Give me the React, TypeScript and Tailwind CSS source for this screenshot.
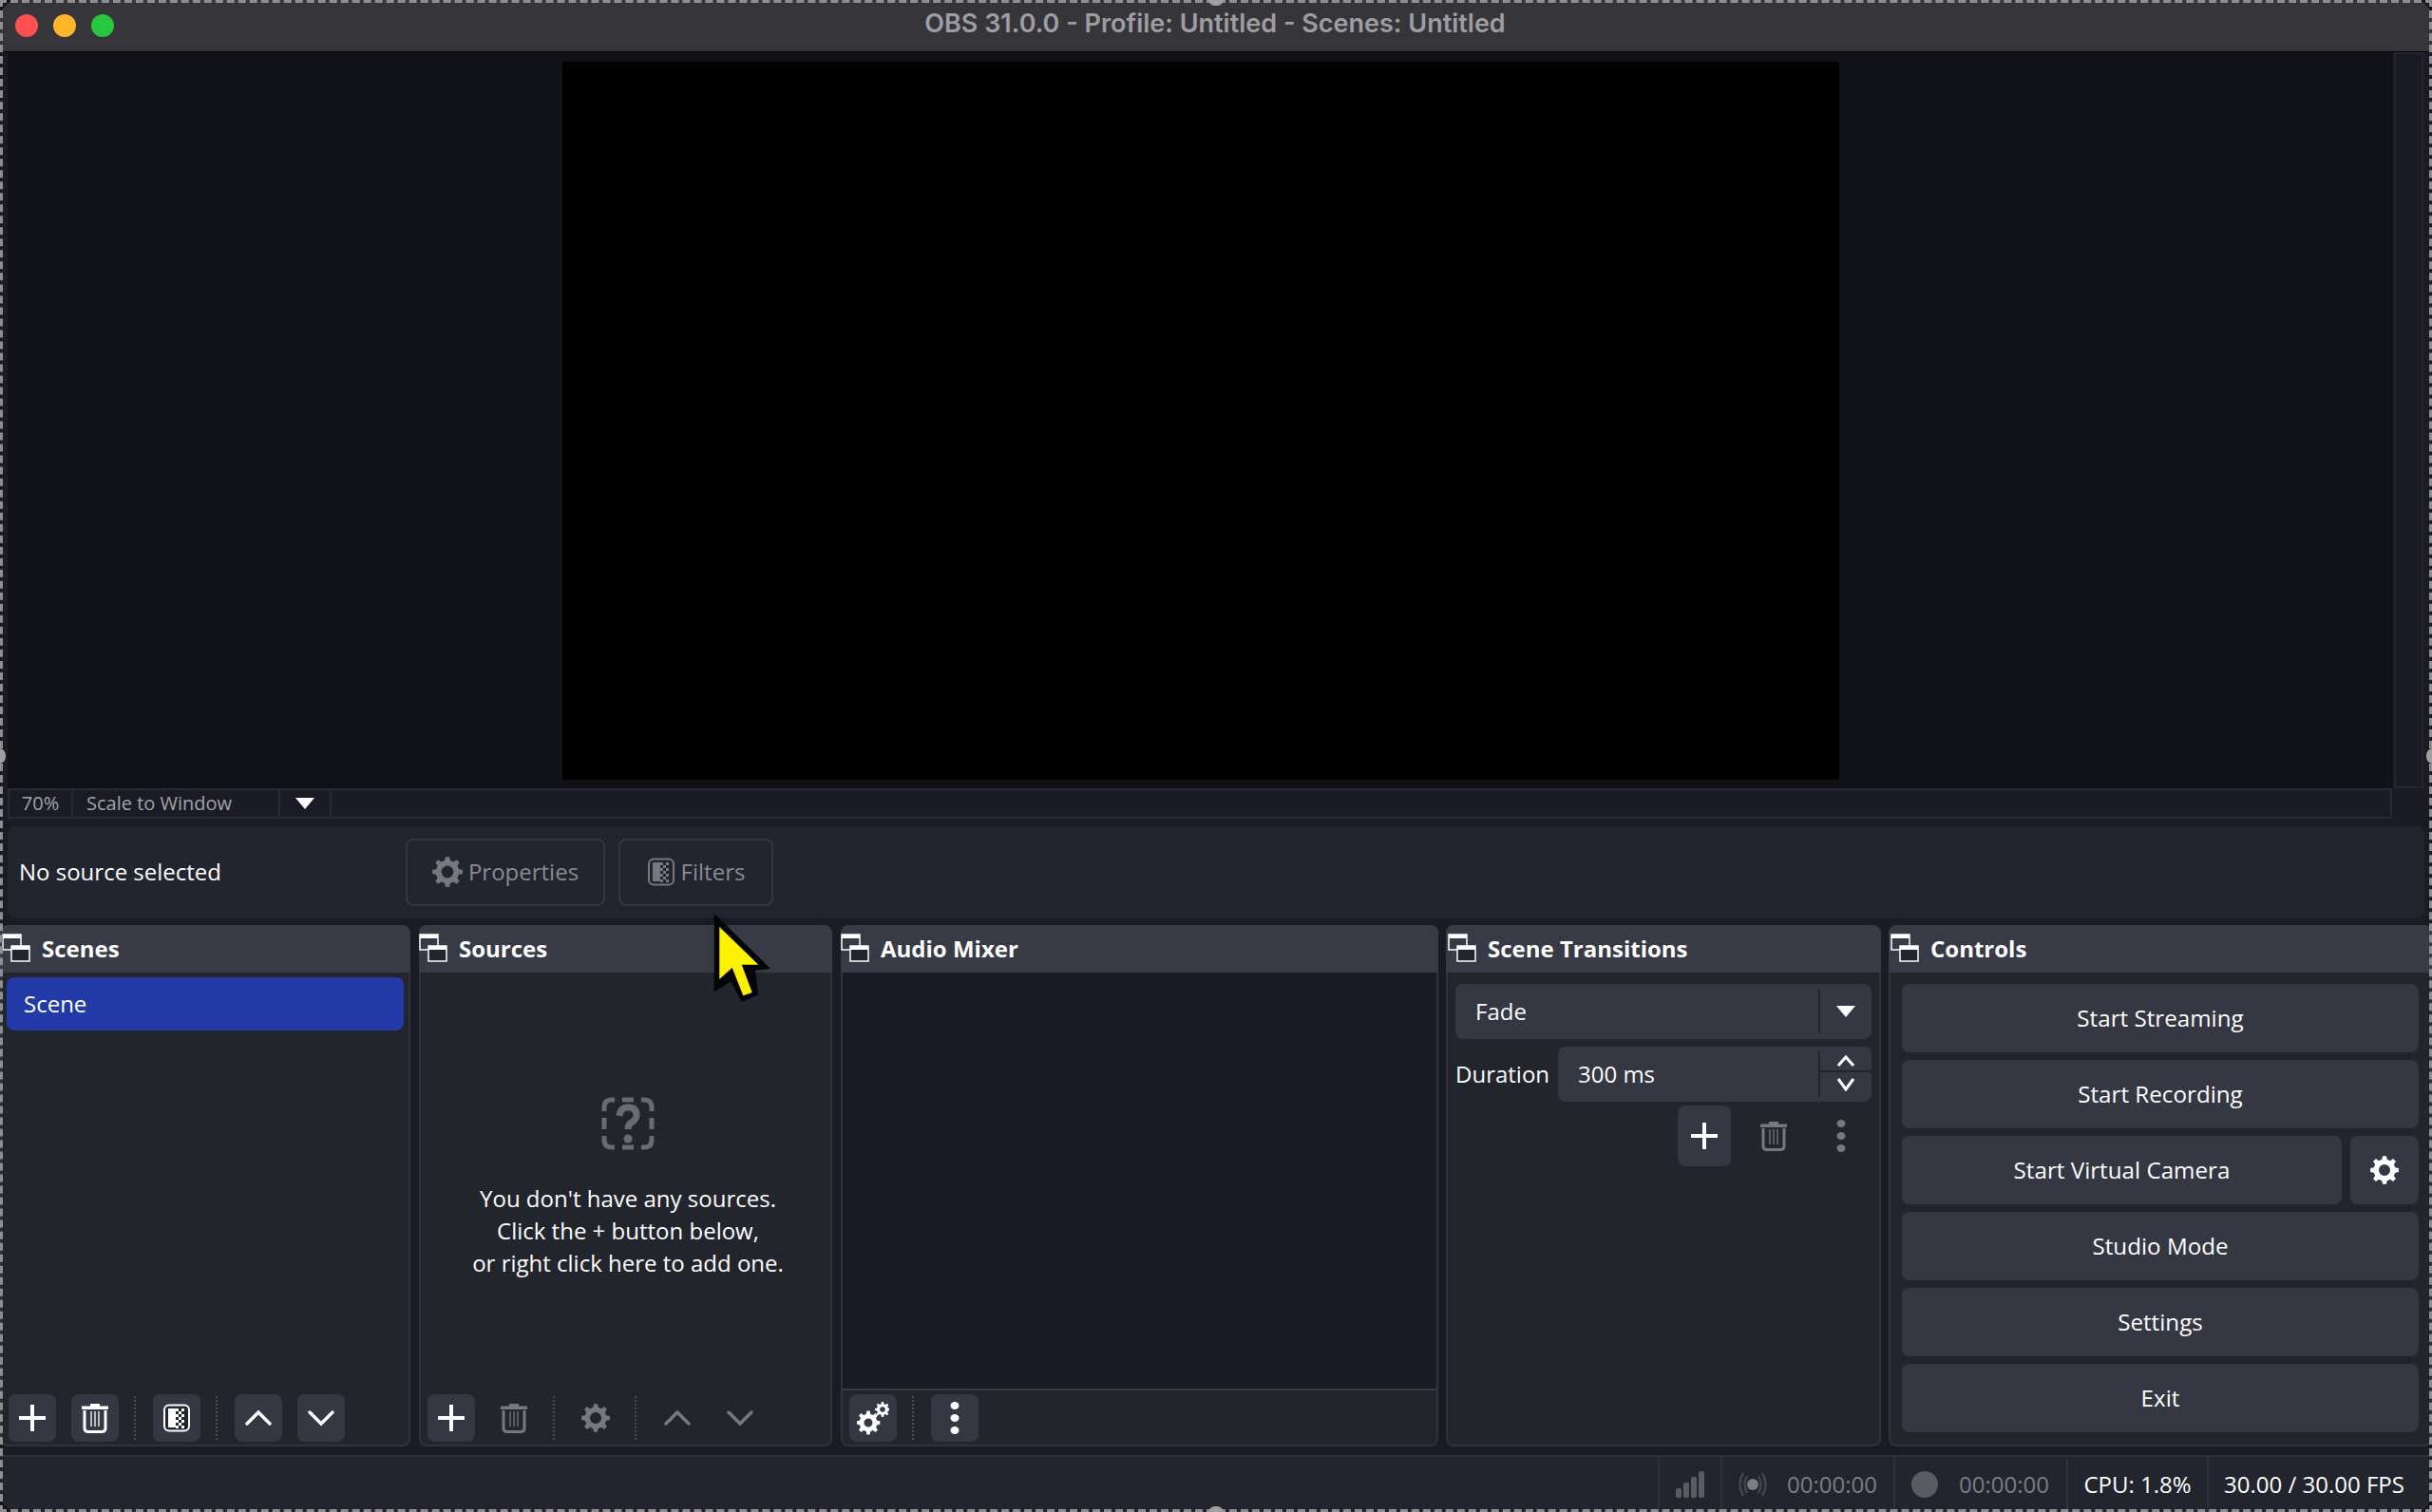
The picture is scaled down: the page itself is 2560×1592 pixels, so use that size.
import type { ReactNode } from 'react';

function gearPath(cx: number, cy: number, outer: number, inner: number, hole: number, teeth = 8) {
  const pts: string[] = [];
  const step = (Math.PI * 2) / teeth;
  for (let i = 0; i < teeth; i++) {
    const a = i * step - Math.PI / 2;
    const list: [number, number][] = [
      [inner, a - step * 0.3],
      [outer, a - step * 0.17],
      [outer, a + step * 0.17],
      [inner, a + step * 0.3],
    ];
    for (const [r, t] of list) {
      pts.push(`${(cx + Math.cos(t) * r).toFixed(2)} ${(cy + Math.sin(t) * r).toFixed(2)}`);
    }
  }
  const d = `M${pts.join('L')}Z`;
  return `${d}M${cx - hole} ${cy}a${hole} ${hole} 0 1 0 ${hole * 2} 0a${hole} ${hole} 0 1 0 ${-hole * 2} 0Z`;
}

function DockIcon() {
  return (
    <svg width="30" height="30" viewBox="0 0 30 30" className="mb-[3px] shrink-0">
      <rect x="1" y="1" width="19" height="16" fill="none" stroke="#fff" strokeWidth="1.5" />
      <rect x="1" y="1" width="19" height="4" fill="#fff" />
      <rect x="10" y="13" width="19" height="16" fill="#23252d" stroke="#fff" strokeWidth="1.5" />
      <rect x="10" y="13" width="19" height="4" fill="#fff" />
    </svg>
  );
}

function Plus() {
  return (
    <svg width="28" height="28" viewBox="0 0 28 28">
      <path d="M14 0V28M0 14H28" stroke="#fff" strokeWidth="4" />
    </svg>
  );
}

function Trash({ color = '#fff' }: { color?: string }) {
  return (
    <svg width="30" height="32" viewBox="0 0 30 32">
      <path d="M10 3.5V1H20V3.500H29V7H1V3.5Z" fill={color} />
      <path d="M4 8V27Q4 30.500 8 30.500H22Q26 30.500 26 27V8" fill="none" stroke={color} strokeWidth="3" />
      <path d="M11 9V25M15 9V25M19 9V25" stroke={color} strokeWidth="1.300" />
    </svg>
  );
}

function Chevron({ up, color = '#fff' }: { up?: boolean; color?: string }) {
  return (
    <svg width="30" height="18" viewBox="0 0 30 18">
      <path d={up ? 'M3 15L15 3L27 15' : 'M3 3L15 15L27 3'} fill="none" stroke={color} strokeWidth="3.500" strokeLinecap="round" />
    </svg>
  );
}

function Gear({ color = '#fff', size = 30 }: { color?: string; size?: number }) {
  return (
    <svg width={size} height={size} viewBox="0 0 30 30">
      <path d={gearPath(15, 15, 15, 11.5, 6)} fill={color} fillRule="evenodd" />
    </svg>
  );
}

function TwoGears() {
  return (
    <svg width="34" height="36" viewBox="0 0 34 36">
      <path d={gearPath(12, 23, 12.5, 9.5, 4.5)} fill="#fff" fillRule="evenodd" />
      <path d={gearPath(27, 9, 8, 6, 2.8)} fill="#fff" fillRule="evenodd" />
    </svg>
  );
}

function Dots({ color = '#fff' }: { color?: string }) {
  return (
    <svg width="10" height="34" viewBox="0 0 10 34">
      <ellipse cx="5" cy="4" rx="4.5" ry="4" fill={color} />
      <ellipse cx="5" cy="17" rx="4.5" ry="4" fill={color} />
      <ellipse cx="5" cy="30" rx="4.5" ry="4" fill={color} />
    </svg>
  );
}

function FilterIcon({ color = '#fff', fade = '#23252d' }: { color?: string; fade?: string }) {
  const cells: ReactNode[] = [];
  for (let y = 0; y < 7; y++) {
    for (let x = 0; x < 3; x++) {
      if ((x + y) % 2 === 0) {
        cells.push(<rect key={`${x}-${y}`} x={14 + x * 3} y={5 + y * 3} width="3" height="3" fill={color} />);
      }
    }
  }
  return (
    <svg width="30" height="30" viewBox="0 0 30 30">
      <rect x="2" y="1.5" width="26" height="27" rx="5" fill={fade} stroke={color} strokeWidth="2" />
      <rect x="6" y="5" width="8" height="20" fill={color} />
      {cells}
    </svg>
  );
}

function Caret() {
  return (
    <svg width="20" height="12" viewBox="0 0 20 12">
      <path d="M0 0H20L10 12Z" fill="#fff" />
    </svg>
  );
}

function ToolButton({ children, plain }: { children: ReactNode; plain?: boolean }) {
  return (
    <div className={plain ? 'flex h-[50px] w-[50px] shrink-0 items-center justify-center rounded-lg' : 'flex h-[50px] w-[50px] shrink-0 items-center justify-center rounded-lg bg-[#353742]'}>
      {children}
    </div>
  );
}

function Sep() {
  return <div className="ml-4 mr-[18px] mt-[2px] h-[46px] border-l-2 border-dotted border-[#4b4c52]" />;
}

function Dock({ title, className, flush, children }: { title: string; className: string; flush?: boolean; children: ReactNode }) {
  return (
    <section className={`flex flex-col ${className}`}>
      <header className={flush ? 'flex h-[50px] shrink-0 items-center gap-3 rounded-t-lg bg-[#383a45]' : 'flex h-[50px] shrink-0 items-center gap-3 rounded-t-lg bg-[#383a45] pl-[2px]'}>
        <DockIcon />
        <span className="text-[24px] font-bold text-white">{title}</span>
      </header>
      <div className="flex min-h-0 flex-1 flex-col rounded-b-lg border-x-2 border-b-2 border-[#2f313b] bg-[#23252d]">{children}</div>
    </section>
  );
}

function Footer({ children }: { children: ReactNode }) {
  return <div className="flex h-[57px] shrink-0 items-start pl-[7px] pt-[4px]">{children}</div>;
}

function BigButton({ label, className = 'w-full' }: { label: string; className?: string }) {
  return <div className={`flex h-[72px] items-center justify-center rounded-lg bg-[#353742] text-[24.2px] text-white ${className}`}>{label}</div>;
}

function EmptySources() {
  return (
    <div className="flex flex-1 flex-col items-center pl-[5px] pt-[131px] text-center text-[24px] leading-[34px] text-white">
      <svg width="56" height="56" viewBox="0 0 56 56" fill="none" stroke="#6a6b70" strokeWidth="5" className="mb-[34px]">
        <path d="M14 3H11Q3 3 3 11V15M42 3H45Q53 3 53 11V15M14 53H11Q3 53 3 45V41M42 53H45Q53 53 53 45V41M3 22V34M53 22V34M22 3H34M22 53H34" />
        <path d="M19 20Q20 11 28 11Q37 11 37 19Q37 24 31.5 27Q28 29 28 34" strokeWidth="7" />
        <circle cx="28" cy="44" r="4.5" fill="#6a6b70" stroke="none" />
      </svg>
      <p>You don't have any sources.</p>
      <p>Click the + button below,</p>
      <p>or right click here to add one.</p>
    </div>
  );
}

function Cursor() {
  return (
    <svg width="70" height="100" viewBox="0 0 70 100" className="absolute left-[748px] top-[958px]">
      <path d="M3.7 3.7L63 62L47 63.700L50.300 89.300L32.700 97L21.300 75.300L3.700 86.300Z" fill="#050505" />
      <path d="M9.300 18L50.300 57.700H32.700L43.700 87L34.300 90.300L22.700 61L9.300 73Z" fill="#fff200" />
    </svg>
  );
}

function Handles() {
  return (
    <>
      <div className="pointer-events-none absolute -inset-px border-4 border-dashed border-[#8f8f92]" />
      <div className="absolute left-[1272px] top-[-8px] h-[14px] w-[16px] rounded-full bg-[#a0a0a0]" />
      <div className="absolute bottom-[-8px] left-[1272px] h-[14px] w-[16px] rounded-full bg-[#a0a0a0]" />
      <div className="absolute left-[-8px] top-[788px] h-[16px] w-[14px] rounded-full bg-[#a0a0a0]" />
      <div className="absolute right-[-8px] top-[788px] h-[16px] w-[14px] rounded-full bg-[#a0a0a0]" />
    </>
  );
}

export default function App() {
  return (
    <div className="relative h-[1592px] w-[2560px] overflow-hidden bg-[#14151b] font-['Open_Sans',sans-serif]">
      <div className="flex h-full w-full flex-col overflow-hidden rounded-[20px] bg-[#1a1b24]">
        <div className="relative flex h-[55px] shrink-0 items-center border-b border-black bg-[#36353a]">
          <div className="ml-4 flex gap-4">
            <span className="h-6 w-6 rounded-full bg-[#ff5050]" />
            <span className="h-6 w-6 rounded-full bg-[#feb52a]" />
            <span className="h-6 w-6 rounded-full bg-[#27c83f]" />
          </div>
          <div className="mb-[3px] flex-1 pr-[122px] text-center font-['Inter',sans-serif] text-[27px] font-semibold text-[#9e9da3]">
            OBS 31.0.0 - Profile: Untitled - Scenes: Untitled
          </div>
        </div>

        <div className="flex h-[775px] shrink-0 pl-2">
          <div className="flex flex-1 items-center justify-center bg-[#111217]">
            <div className="h-[756px] w-[1344px] bg-black" />
          </div>
          <div className="ml-px mr-[9px] w-[31px] border-2 border-[#24252e] bg-[#191a24]" />
        </div>

        <div className="ml-2 mr-[42px] flex h-[32px] shrink-0 items-center border-2 border-[#272934] text-[20px] text-[#a3a4a8]">
          <div className="flex h-full w-[67px] items-center justify-center border-r-2 border-[#272934]">70%</div>
          <div className="flex h-full w-[218px] items-center border-r-2 border-[#272934] pl-[14px]">Scale to Window</div>
          <div className="flex h-full w-[54px] items-center justify-center border-r-2 border-[#272934]"><Caret /></div>
        </div>

        <div className="ml-2 mr-2 mt-2 flex h-[96px] shrink-0 items-center rounded-lg bg-[#22252d] pl-3 text-[24px]">
          <span className="w-[407px] text-white">No source selected</span>
          <div className="flex h-[71px] w-[210px] items-center justify-center gap-[6px] rounded-lg border-2 border-[#34363f] text-[#8a8b90]">
            <Gear color="#77787d" size={32} /> Properties
          </div>
          <div className="ml-[14px] flex h-[71px] w-[163px] items-center justify-center gap-[6px] rounded-lg border-2 border-[#34363f] text-[#8a8b90]">
            <FilterIcon color="#77787d" /> Filters
          </div>
        </div>

        <div className="mt-2 flex h-[549px] shrink-0">
          <Dock title="Scenes" className="w-[432px]">
            <div className="mx-[5px] mt-[5px] flex h-[56px] items-center rounded-lg bg-[#213aa7] pl-[18px] text-[24px] text-white">Scene</div>
            <div className="flex-1" />
            <Footer>
              <ToolButton><Plus /></ToolButton>
              <div className="w-4" />
              <ToolButton><Trash /></ToolButton>
              <Sep />
              <ToolButton><FilterIcon /></ToolButton>
              <Sep />
              <ToolButton><Chevron up /></ToolButton>
              <div className="w-4" />
              <ToolButton><Chevron /></ToolButton>
            </Footer>
          </Dock>

          <Dock title="Sources" flush className="ml-[9px] w-[435px]">
            <EmptySources />
            <Footer>
              <ToolButton><Plus /></ToolButton>
              <div className="w-4" />
              <ToolButton plain><Trash color="#77787d" /></ToolButton>
              <Sep />
              <ToolButton plain><Gear color="#77787d" /></ToolButton>
              <Sep />
              <ToolButton plain><Chevron up color="#77787d" /></ToolButton>
              <div className="w-4" />
              <ToolButton plain><Chevron color="#77787d" /></ToolButton>
            </Footer>
          </Dock>

          <Dock title="Audio Mixer" flush className="ml-[9px] w-[629px]">
            <div className="flex-1 border-b-2 border-[#383a45] bg-[#191a24]" />
            <Footer>
              <ToolButton><TwoGears /></ToolButton>
              <Sep />
              <ToolButton><Dots /></ToolButton>
            </Footer>
          </Dock>

          <Dock title="Scene Transitions" className="ml-2 w-[458px]">
            <div className="flex flex-col gap-2 pl-2 pr-2 pt-3 text-[24px] text-white">
              <div className="flex h-[58px] items-center rounded-lg bg-[#353742] pl-[21px]">
                <span className="flex-1">Fade</span>
                <div className="flex h-[48px] w-[56px] items-center justify-center border-l-2 border-[#23252d]"><Caret /></div>
              </div>
              <div className="flex h-[58px] items-center">
                <span className="w-[108px] shrink-0">Duration</span>
                <div className="flex h-full flex-1 items-center rounded-lg bg-[#353742] pl-[21px]">
                  <span className="flex-1">300 ms</span>
                  <div className="flex h-[48px] w-[56px] flex-col items-center justify-center border-l-2 border-[#23252d]">
                    <div className="flex h-[22px] w-full items-center justify-center border-b-2 border-[#23252d]">
                      <svg width="20" height="12" viewBox="0 0 20 12"><path d="M2 11L10 2L18 11" fill="none" stroke="#fff" strokeWidth="3" /></svg>
                    </div>
                    <div className="flex h-[26px] items-center justify-center">
                      <svg width="20" height="14" viewBox="0 0 20 14"><path d="M2 1L10 12L18 1" fill="none" stroke="#fff" strokeWidth="3" /></svg>
                    </div>
                  </div>
                </div>
              </div>
            </div>
            <div className="mt-[4px] flex items-center justify-end pr-[12px]">
              <div className="flex h-[64px] w-[56px] items-center justify-center rounded-lg bg-[#353742]"><Plus /></div>
              <div className="ml-[17px] flex h-[64px] w-[56px] items-center justify-center"><Trash color="#77787d" /></div>
              <div className="ml-[15px] flex h-[64px] w-[56px] items-center justify-center"><Dots color="#77787d" /></div>
            </div>
          </Dock>

          <Dock title="Controls" className="ml-2 w-[572px]">
            <div className="flex flex-col gap-2 pl-3 pr-3 pt-3">
              <BigButton label="Start Streaming" />
              <BigButton label="Start Recording" />
              <div className="flex gap-[9px]">
                <BigButton label="Start Virtual Camera" className="flex-1" />
                <div className="flex h-[72px] w-[72px] items-center justify-center rounded-lg bg-[#353742]"><Gear /></div>
              </div>
              <BigButton label="Studio Mode" />
              <BigButton label="Settings" />
              <BigButton label="Exit" />
            </div>
          </Dock>
        </div>

        <div className="mt-[9px] flex flex-1 items-stretch border-t-2 border-[#2e303a] bg-[#22252d] text-[24px]">
          <div className="flex-1" />
          <div className="flex w-[66px] items-center justify-center border-l-2 border-[#2e303a]">
            <svg width="30" height="28" viewBox="0 0 30 28" fill="#5b5c62">
              <rect x="0" y="18" width="6" height="10" rx="2" />
              <rect x="8" y="12" width="6" height="16" rx="2" />
              <rect x="16" y="6" width="6" height="22" rx="2" />
              <rect x="24" y="0" width="6" height="28" rx="2" />
            </svg>
          </div>
          <div className="flex w-[182px] items-center gap-[20px] border-l-2 border-[#2e303a] pl-[16px] text-[#7c7d82]">
            <svg width="32" height="28" viewBox="0 0 32 28" fill="none">
              <circle cx="16" cy="14" r="6" fill="#7c7d82" />
              <path d="M10 5Q5 14 10 23M22 5Q27 14 22 23M6 2Q-1 14 6 26M26 2Q33 14 26 26" stroke="#44454b" strokeWidth="2.5" />
            </svg>
            00:00:00
          </div>
          <div className="flex w-[182px] items-center gap-[22px] border-l-2 border-[#2e303a] pl-[17px] text-[#7c7d82]">
            <div className="h-[28px] w-[28px] rounded-full bg-[#5b5c62]" />
            00:00:00
          </div>
          <div className="flex w-[148px] items-center justify-center border-l-2 border-[#2e303a] text-white">CPU: 1.8%</div>
          <div className="flex w-[237px] items-center border-l-2 border-[#2e303a] pl-[16px] text-white">30.00 / 30.00 FPS</div>
        </div>
      </div>
      <Cursor />
      <Handles />
    </div>
  );
}
